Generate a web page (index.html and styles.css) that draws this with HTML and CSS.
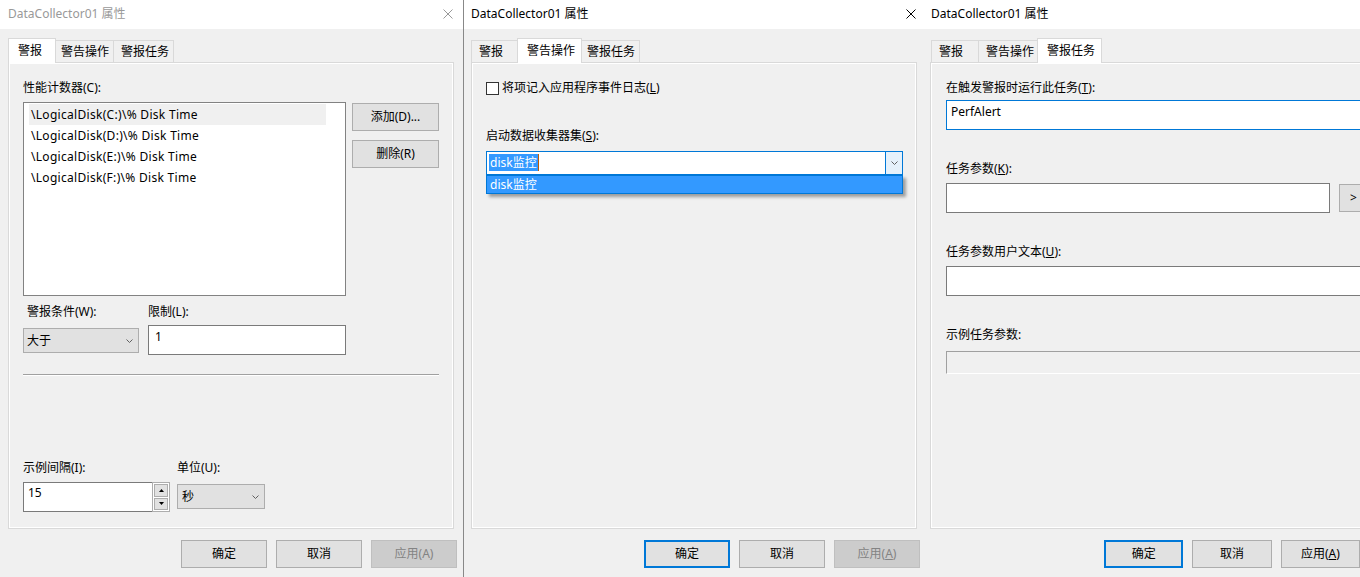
FILE: index.html
```html
<!DOCTYPE html>
<html lang="zh-CN">
<head>
    <meta charset="UTF-8">
    <title>DataCollector01 属性</title>
    <link rel="stylesheet" href="styles.css">
</head>
<body>
    <div class="screen">
        <!-- alert tab -->
        <section class="dialog dialog-first inactive">
            <header class="titlebar">
                <span class="title">DataCollector01 属性</span>
                <svg class="close" width="10" height="10" viewBox="0 0 10 10"><path d="M0.5 0.5L9.5 9.5M9.5 0.5L0.5 9.5"/></svg>
            </header>
            <nav class="tabs">
                <div class="tab active">警报</div>
                <div class="tab">警告操作</div>
                <div class="tab">警报任务</div>
            </nav>
            <div class="page">
                <div class="label">性能计数器(C):</div>
                <div class="counter-row">
                    <div class="listbox">
                        <div class="list-item selected">\LogicalDisk(C:)\% Disk Time</div>
                        <div class="list-item">\LogicalDisk(D:)\% Disk Time</div>
                        <div class="list-item">\LogicalDisk(E:)\% Disk Time</div>
                        <div class="list-item">\LogicalDisk(F:)\% Disk Time</div>
                    </div>
                    <div class="side-buttons">
                        <button class="btn">添加(D)...</button>
                        <button class="btn">删除(R)</button>
                    </div>
                </div>
                <div class="field-row condition-row">
                    <div class="field field-cond">
                        <div class="label label-indent">警报条件(W):</div>
                        <div class="select select-cond">
                            <span>大于</span>
                            <svg class="chevron" width="7" height="4" viewBox="0 0 7 4"><path d="M0.5 0.5L3.5 3.5L6.5 0.5"/></svg>
                        </div>
                    </div>
                    <div class="field">
                        <div class="label">限制(L):</div>
                        <div class="textbox textbox-limit">1</div>
                    </div>
                </div>
                <div class="separator"></div>
                <div class="field-row interval-row">
                    <div class="field">
                        <div class="label">示例间隔(I):</div>
                        <div class="spinner">
                            <div class="textbox textbox-interval">15</div>
                            <div class="spin">
                                <div class="spin-btn"><svg width="5" height="3" viewBox="0 0 5 3"><path d="M2.5 0L5 3H0Z"/></svg></div>
                                <div class="spin-btn"><svg width="5" height="3" viewBox="0 0 5 3"><path d="M0 0H5L2.5 3Z"/></svg></div>
                            </div>
                        </div>
                    </div>
                    <div class="field field-unit">
                        <div class="label">单位(U):</div>
                        <div class="select select-unit">
                            <span>秒</span>
                            <svg class="chevron" width="7" height="4" viewBox="0 0 7 4"><path d="M0.5 0.5L3.5 3.5L6.5 0.5"/></svg>
                        </div>
                    </div>
                </div>
            </div>
            <div class="actions">
                <button class="btn">确定</button>
                <button class="btn">取消</button>
                <button class="btn disabled">应用(A)</button>
            </div>
        </section>

        <!-- action tab -->
        <section class="dialog dialog-second">
            <header class="titlebar">
                <span class="title">DataCollector01 属性</span>
                <svg class="close" width="10" height="10" viewBox="0 0 10 10"><path d="M0.5 0.5L9.5 9.5M9.5 0.5L0.5 9.5"/></svg>
            </header>
            <nav class="tabs">
                <div class="tab">警报</div>
                <div class="tab active">警告操作</div>
                <div class="tab">警报任务</div>
            </nav>
            <div class="page">
                <label class="check-row">
                    <span class="checkbox"></span>
                    <span>将项记入应用程序事件日志(<u>L</u>)</span>
                </label>
                <div class="label label-collector">启动数据收集器集(<u>S</u>):</div>
                <div class="combo">
                    <div class="combo-input"><span class="selection">disk监控</span></div>
                    <div class="combo-button">
                        <svg class="chevron" width="7" height="4" viewBox="0 0 7 4"><path d="M0.5 0.5L3.5 3.5L6.5 0.5"/></svg>
                    </div>
                    <div class="combo-list">
                        <div class="combo-option">disk监控</div>
                    </div>
                </div>
            </div>
            <div class="actions">
                <button class="btn primary">确定</button>
                <button class="btn">取消</button>
                <button class="btn disabled">应用(<u>A</u>)</button>
            </div>
        </section>

        <!-- task tab -->
        <section class="dialog dialog-third">
            <header class="titlebar">
                <span class="title">DataCollector01 属性</span>
            </header>
            <nav class="tabs">
                <div class="tab">警报</div>
                <div class="tab">警告操作</div>
                <div class="tab active">警报任务</div>
            </nav>
            <div class="page">
                <div class="label">在触发警报时运行此任务(<u>T</u>):</div>
                <div class="textbox textbox-wide focused">PerfAlert</div>
                <div class="label label-gap">任务参数(<u>K</u>):</div>
                <div class="param-row">
                    <div class="textbox textbox-param"></div>
                    <button class="btn btn-small">&gt;</button>
                </div>
                <div class="label label-gap">任务参数用户文本(<u>U</u>):</div>
                <div class="textbox textbox-wide"></div>
                <div class="label label-gap">示例任务参数:</div>
                <div class="readonly-box"></div>
            </div>
            <div class="actions">
                <button class="btn primary">确定</button>
                <button class="btn">取消</button>
                <button class="btn">应用(<u>A</u>)</button>
            </div>
        </section>
    </div>
</body>
</html>
```

FILE: styles.css
```css
body {
    margin: 0;
    background-color: #f0f0f0;
    font-family: "Noto Sans", "Noto Sans CJK SC", sans-serif;
    font-size: 12px;
    line-height: 16px;
    color: #000000;
}
.screen {
    display: flex;
    height: 577px;
    overflow: hidden;
}
.dialog {
    display: flex;
    flex-direction: column;
    flex-shrink: 0;
    background-color: #f0f0f0;
}
.dialog-first {
    width: 463px;
    border-right: 1px solid #888888;
}
.dialog-second {
    width: 459px;
}
.dialog-third {
    flex: 1;
    flex-shrink: 1;
    min-width: 0;
    overflow: hidden;
}
.titlebar {
    height: 29px;
    background-color: #ffffff;
    display: flex;
    align-items: center;
    justify-content: space-between;
    padding: 0 7px 1px 7px;
    box-sizing: border-box;
}
.dialog-first .titlebar {
    padding-left: 8px;
    padding-right: 10px;
}
.dialog-third .titlebar {
    padding-left: 8px;
}
.title {
    white-space: nowrap;
}
.close path {
    stroke: #000000;
    stroke-width: 1;
    fill: none;
}
.inactive .title {
    color: #999999;
}
.inactive .close path {
    stroke: #999999;
}
.tabs {
    display: flex;
    align-items: flex-end;
    height: 24px;
    margin-top: 9px;
    padding-left: 7px;
    position: relative;
    z-index: 1;
}
.dialog-first .tabs {
    padding-left: 10px;
}
.dialog-third .tabs {
    padding-left: 8px;
}
.tab {
    height: 22px;
    line-height: 21px;
    min-width: 48px;
    padding: 0 4px 0 7px;
    box-sizing: border-box;
    border: 1px solid #d9d9d9;
    border-bottom: none;
    background-color: #f0f0f0;
    margin-left: -1px;
    white-space: nowrap;
}
.tab:first-child {
    margin-left: 0;
}
.tab.active {
    height: 25px;
    line-height: 23px;
    margin: 0 -2px -1px -2px;
    padding: 0 6px 0 9px;
    background-color: #ffffff;
    position: relative;
    z-index: 2;
}
.tab.active:first-child {
    margin-left: -2px;
}
.page {
    width: 446px;
    height: 467px;
    flex-shrink: 0;
    box-sizing: border-box;
    margin-left: 7px;
    border: 1px solid #d9d9d9;
    box-shadow: inset 0 0 0 1px #ffffff;
    padding: 17px 14px 0 14px;
    display: flex;
    flex-direction: column;
    align-items: flex-start;
}
.dialog-first .page {
    margin-left: 8px;
}
.dialog-third .page {
    padding-left: 15px;
}
.label {
    white-space: nowrap;
}
.label-indent {
    padding-left: 4px;
}
u {
    text-decoration: underline;
    text-underline-offset: 1px;
}
.btn {
    font: inherit;
    color: #000000;
    width: 86px;
    height: 28px;
    padding: 0;
    border: 1px solid #adadad;
    background-color: #e1e1e1;
    box-sizing: border-box;
}
.btn.primary {
    border: 2px solid #0078d7;
}
.btn.disabled {
    background-color: #cccccc;
    border-color: #bfbfbf;
    color: #838383;
}
.actions {
    display: flex;
    gap: 9px;
    margin-top: 11px;
    padding-left: 181px;
}
.dialog-second .actions {
    padding-left: 180px;
}

/* alert page */
.counter-row {
    display: flex;
    gap: 6px;
    margin-top: 6px;
}
.listbox {
    width: 323px;
    height: 194px;
    box-sizing: border-box;
    border: 1px solid #828282;
    background-color: #ffffff;
    padding: 1px 0 0 5px;
}
.list-item {
    width: 297px;
    height: 21px;
    line-height: 21px;
    padding-left: 2px;
    box-sizing: border-box;
    white-space: nowrap;
    letter-spacing: 0.3px;
}
.list-item.selected {
    background-color: #f0f0f0;
}
.side-buttons {
    display: flex;
    flex-direction: column;
    gap: 9px;
    padding-top: 1px;
}
.side-buttons .btn {
    width: 87px;
}
.field-row {
    display: flex;
    align-items: flex-start;
}
.field {
    display: flex;
    flex-direction: column;
}
.condition-row {
    gap: 9px;
    margin-top: 8px;
}
.field-cond {
    width: 116px;
}
.select {
    height: 25px;
    box-sizing: border-box;
    border: 1px solid #adadad;
    background-color: #e1e1e1;
    display: flex;
    align-items: center;
    justify-content: space-between;
    padding: 0 5px 0 3px;
    margin-top: 8px;
}
.select-cond {
    width: 116px;
}
.chevron path {
    fill: none;
    stroke: #606060;
    stroke-width: 1;
}
.textbox {
    height: 30px;
    box-sizing: border-box;
    border: 1px solid #7a7a7a;
    background-color: #ffffff;
    padding: 3px 0 0 6px;
    white-space: nowrap;
}
.textbox-limit {
    width: 198px;
    margin-top: 5px;
}
.separator {
    width: 416px;
    border-top: 1px solid #a0a0a0;
    border-bottom: 1px solid #ffffff;
    margin-top: 19px;
}
.interval-row {
    gap: 7px;
    margin-top: 84px;
}
.spinner {
    display: flex;
    margin-top: 6px;
}
.textbox-interval {
    width: 129px;
    padding-top: 2px;
    padding-left: 4px;
    border-right: none;
}
.spin {
    width: 18px;
    height: 30px;
    box-sizing: border-box;
    border: 1px solid #adadad;
    background-color: #ffffff;
    padding: 1px;
    display: flex;
    flex-direction: column;
    gap: 1px;
}
.spin-btn {
    flex: 1;
    background-color: #e1e1e1;
    border: 1px solid #adadad;
    display: flex;
    align-items: center;
    justify-content: center;
}
.spin-btn path {
    fill: #000000;
}
.select-unit {
    width: 88px;
    padding-left: 4px;
}

/* action page */
.check-row {
    display: flex;
    align-items: center;
    gap: 3px;
}
.checkbox {
    width: 13px;
    height: 13px;
    box-sizing: border-box;
    border: 1px solid #333333;
    background-color: #ffffff;
}
.label-collector {
    margin-top: 32px;
}
.combo {
    position: relative;
    width: 417px;
    height: 24px;
    box-sizing: border-box;
    border: 1px solid #0078d7;
    background-color: #ffffff;
    margin-top: 7px;
    display: flex;
}
.combo-input {
    flex: 1;
    padding: 2px 0 0 2px;
}
.selection {
    display: inline-block;
    background-color: #3399ff;
    color: #ffffff;
    padding: 0 1px;
    line-height: 17px;
    border-right: 1px solid #c05a00;
}
.combo-button {
    width: 16px;
    border-left: 1px solid #0078d7;
    background-color: #e5f1fb;
    display: flex;
    align-items: center;
    justify-content: center;
}
.combo-list {
    position: absolute;
    left: -1px;
    right: -1px;
    top: 23px;
    border: 1px solid #0078d7;
    background-color: #3399ff;
    box-shadow: 3px 3px 3px rgba(0, 0, 0, 0.35);
}
.combo-option {
    color: #ffffff;
    height: 17px;
    line-height: 17px;
    padding-left: 3px;
}

/* task page */
.textbox-wide {
    width: 415px;
    margin-top: 4px;
    flex-shrink: 0;
    padding-left: 4px;
}
.textbox.focused {
    border-color: #0078d7;
}
.label-gap {
    margin-top: 31px;
}
.label-gap + .textbox-wide {
    margin-top: 6px;
}
.param-row {
    display: flex;
    align-items: flex-start;
    gap: 9px;
    margin-top: 6px;
}
.textbox-param {
    width: 384px;
}
.btn-small {
    width: 24px;
    margin-top: 1px;
    text-align: left;
    padding-left: 10px;
}
.readonly-box {
    width: 415px;
    height: 23px;
    flex-shrink: 0;
    box-sizing: border-box;
    border-top: 1px solid #a0a0a0;
    border-left: 1px solid #a0a0a0;
    border-bottom: 1px solid #ffffff;
    margin-top: 8px;
}
```
